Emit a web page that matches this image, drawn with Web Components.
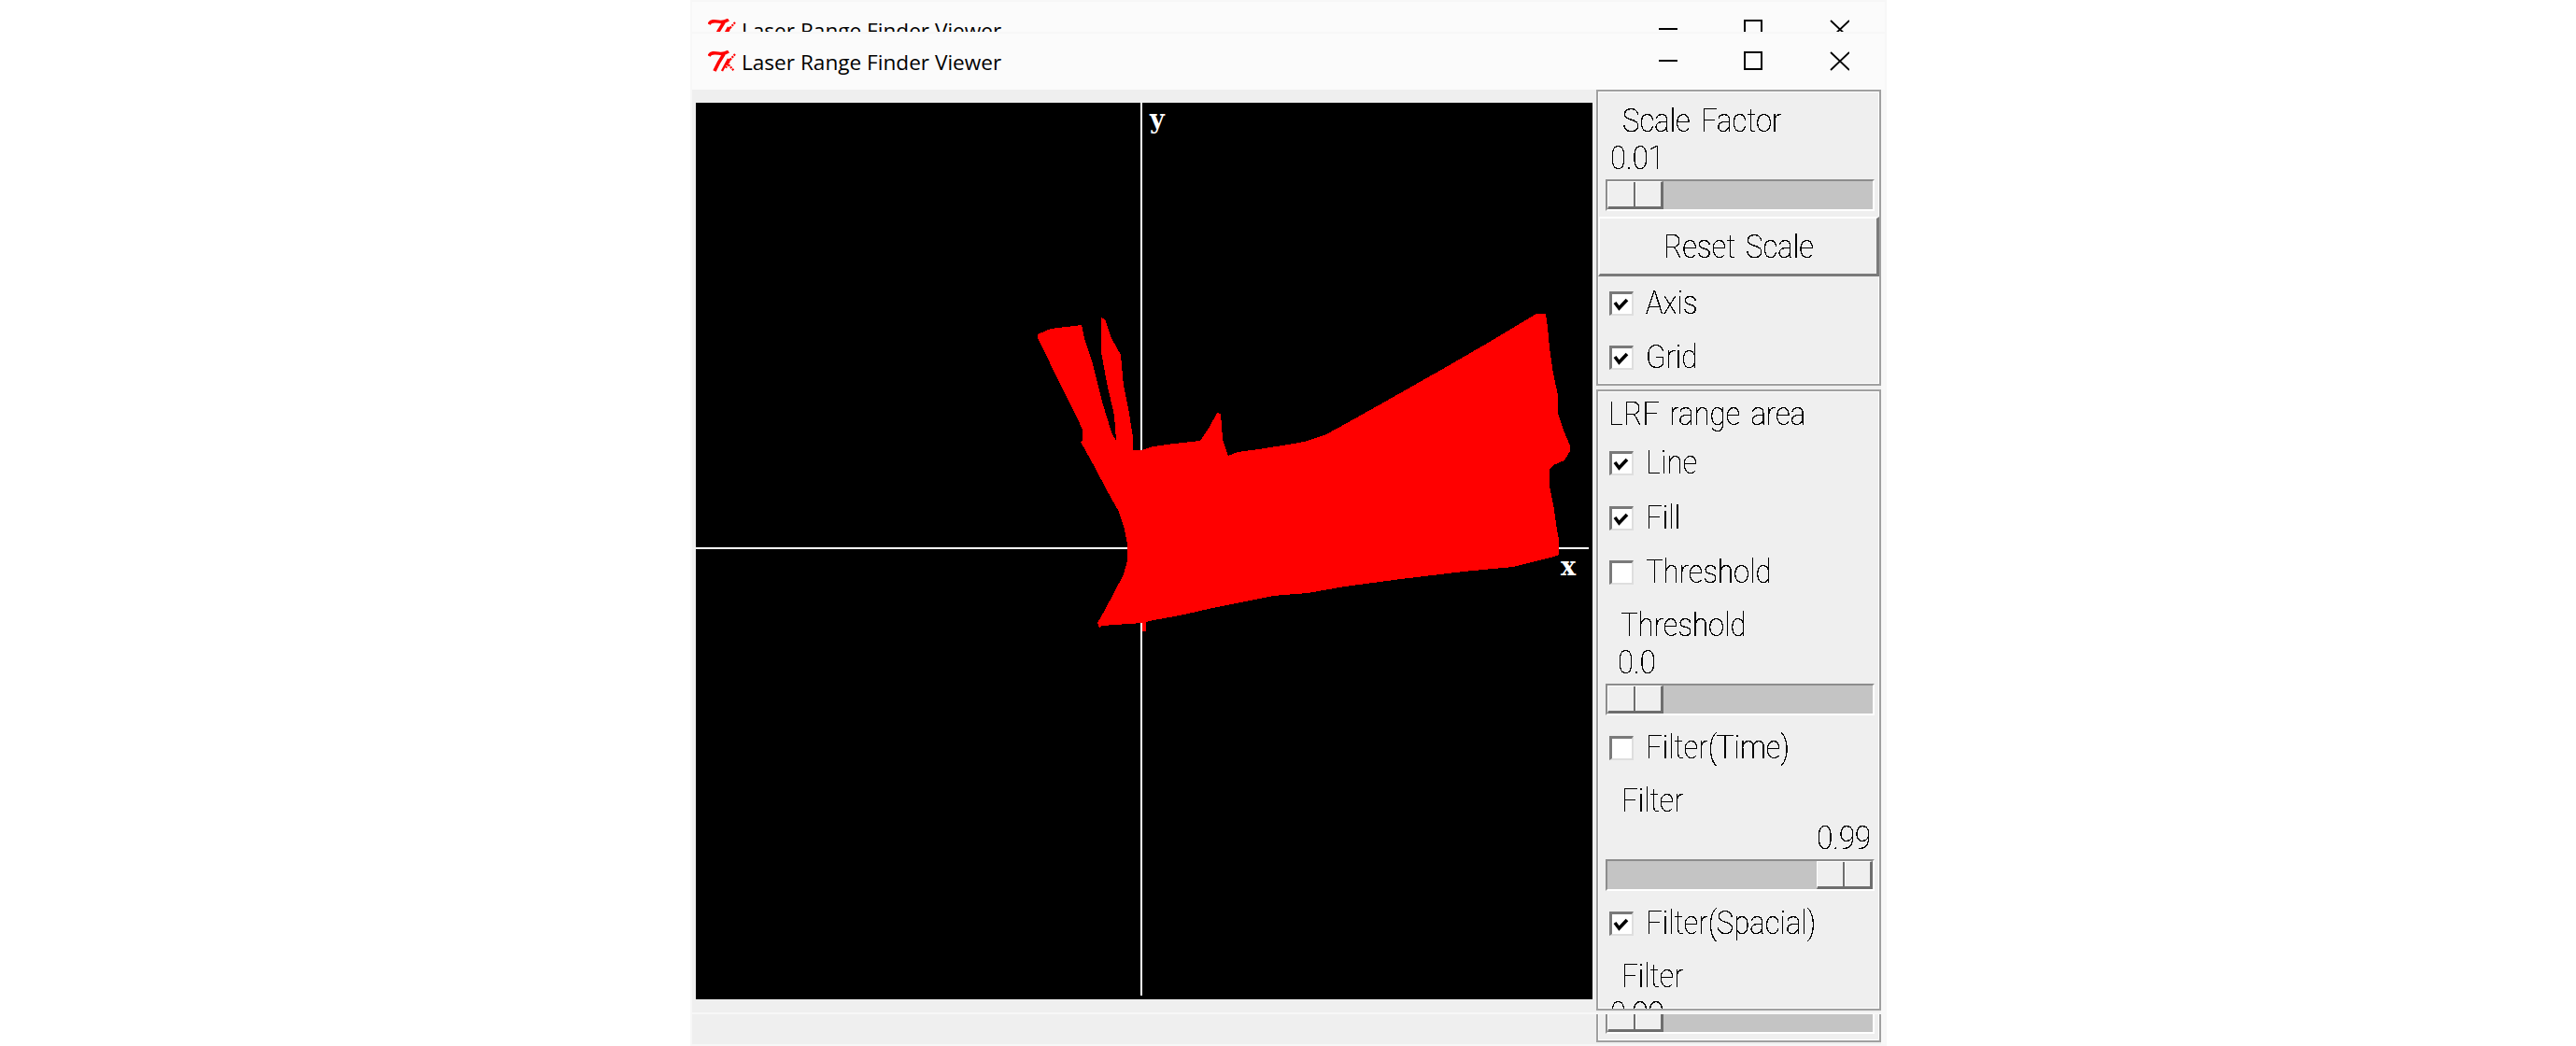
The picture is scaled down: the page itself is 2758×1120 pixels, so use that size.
<!DOCTYPE html>
<html>
<head>
<meta charset="utf-8">
<title>Laser Range Finder Viewer</title>
<style>
    html, body { margin: 0; height: 100%; background: #fff; }
    body { overflow: hidden; }
    lrf-window.back { left: 741px; top: 2px; height: 1116px; }
    lrf-window.front { left: 741px; top: 36px; height: 1048px; }
</style>
</head>
<body>
<lrf-window class="back">
    <tk-frame slot="panel" style="height: 1054px; justify-content: flex-end; padding-bottom: 1px;">
        <tk-scale pos="0" bare></tk-scale>
    </tk-frame>
</lrf-window>

<lrf-window class="front">
    <lrf-canvas slot="canvas"></lrf-canvas>
    <tk-frame slot="panel" style="height: 317px; margin-bottom: 4px;">
        <tk-scale label="Scale Factor" value="0.01" pos="0" label-x="25" value-x="12" style="margin-top: 3px;"></tk-scale>
        <tk-button>Reset Scale</tk-button>
        <tk-check checked>Axis</tk-check>
        <tk-check checked>Grid</tk-check>
    </tk-frame>
    <tk-frame slot="panel" style="height: 665px;">
        <tk-text style="height: 47px; padding: 11px 0 0 10px; box-sizing: border-box;">LRF range area</tk-text>
        <tk-check checked style="--row-h: 59px;">Line</tk-check>
        <tk-check checked>Fill</tk-check>
        <tk-check>Threshold</tk-check>
        <tk-scale label="Threshold" value="0.0" pos="0" label-x="23" value-x="20"></tk-scale>
        <tk-check>Filter(Time)</tk-check>
        <tk-scale label="Filter" value="0.99" pos="1" label-x="24" value-end></tk-scale>
        <tk-check checked>Filter(Spacial)</tk-check>
        <tk-scale label="Filter" value="0.99" pos="0" label-x="24" value-x="12"></tk-scale>
    </tk-frame>
</lrf-window>

<script>
// thin aliased lettering, like the old bitmap font Tk falls back on
class TkText extends HTMLElement {
    constructor() {
        super();
        this.attachShadow({ mode: 'open' });
    }

    connectedCallback() {
        this.shadowRoot.innerHTML = `
            <style>
                :host {
                    display: block;
                    flex-shrink: 0;
                    font-family: Roboto, "Liberation Sans", sans-serif;
                    font-weight: 100;
                    font-size: 35px;
                    line-height: 26px;
                    word-spacing: 4px;
                    color: #000;
                    white-space: nowrap;
                }
                .crisp { display: inline-block; filter: url(#crisp); }
                .squeeze {
                    display: inline-block;
                    transform: scaleX(var(--squeeze, 0.89));
                    transform-origin: var(--origin, left) center;
                }
                svg { position: absolute; width: 0; height: 0; }
            </style>
            <svg aria-hidden="true"><filter id="crisp" x="-5%" y="-20%" width="110%" height="140%" color-interpolation-filters="sRGB">
                <feComponentTransfer><feFuncA type="discrete" tableValues="0 1 1 1"></feFuncA></feComponentTransfer>
            </filter></svg>
            <span class="crisp"><span class="squeeze"><slot></slot></span></span>
        `;
    }
}

class TkFrame extends HTMLElement {
    constructor() {
        super();
        this.attachShadow({ mode: 'open' });
    }

    connectedCallback() {
        this.shadowRoot.innerHTML = `
            <style>
                :host {
                    display: flex;
                    flex-direction: column;
                    box-sizing: border-box;
                    width: 305px;
                    border: 2px solid #a0a0a0;
                    padding: 1px;
                    background: #efefef;
                    box-shadow: inset 0 0 0 1px #fff;
                    overflow: hidden;
                    flex-shrink: 0;
                }
            </style>
            <slot></slot>
        `;
    }
}

class TkScale extends HTMLElement {
    constructor() {
        super();
        this.attachShadow({ mode: 'open' });
    }

    connectedCallback() {
        const label = this.getAttribute('label');
        const value = this.getAttribute('value');
        const atEnd = this.getAttribute('pos') === '1';
        const labelX = this.getAttribute('label-x') || 0;
        const valueX = this.getAttribute('value-x') || 0;
        const valueEnd = this.hasAttribute('value-end');
        const bare = this.hasAttribute('bare');

        this.shadowRoot.innerHTML = `
            <style>
                :host {
                    display: block;
                    height: ${bare ? 40 : 130}px;
                    flex-shrink: 0;
                }
                .label { height: 54px; box-sizing: border-box; padding: 15px 0 0 ${labelX}px; }
                .value { height: 36px; box-sizing: border-box; padding: 1px 0 0 ${valueX}px; }
                .value.end { padding: 1px 8px 0 0; text-align: right; --origin: right; display: flex; justify-content: flex-end; }
                .trough {
                    box-sizing: border-box;
                    display: flex;
                    justify-content: ${atEnd ? 'flex-end' : 'flex-start'};
                    margin: 0 4px 0 7px;
                    height: 34px;
                    background: #c4c4c4;
                    border-top: 2px solid #8c8c8c;
                    border-left: 2px solid #8c8c8c;
                    border-bottom: 2px solid #fff;
                    border-right: 2px solid #fff;
                }
                .thumb {
                    box-sizing: border-box;
                    display: flex;
                    width: 60px;
                    height: 30px;
                    background: #efefef;
                    border-top: 1px solid #fff;
                    border-left: 1px solid #fff;
                    border-right: 3px solid #6e6e6e;
                    border-bottom: 3px solid #6e6e6e;
                }
                .thumb i { flex: 1; }
                .thumb i:first-child { border-right: 2px solid #6e6e6e; }
                .thumb i:last-child { border-left: 1px solid #fff; }
            </style>
            ${bare ? '' : `<tk-text class="label">${label}</tk-text>
            <tk-text class="value ${valueEnd ? 'end' : ''}">${value}</tk-text>`}
            <div class="trough"><div class="thumb"><i></i><i></i></div></div>
        `;
    }
}

class TkButton extends HTMLElement {
    constructor() {
        super();
        this.attachShadow({ mode: 'open' });
    }

    connectedCallback() {
        this.shadowRoot.innerHTML = `
            <style>
                :host {
                    display: flex;
                    align-items: center;
                    justify-content: center;
                    box-sizing: border-box;
                    height: 64px;
                    margin: 0 -1px;
                    padding-top: 2px;
                    flex-shrink: 0;
                    background: #efefef;
                    border-top: 2px solid #fff;
                    border-left: 2px solid #fff;
                    border-right: 3px solid #7a7a7a;
                    border-bottom: 3px solid #7a7a7a;
                    --origin: center;
                }
            </style>
            <tk-text><slot></slot></tk-text>
        `;
    }
}

class TkCheck extends HTMLElement {
    constructor() {
        super();
        this.attachShadow({ mode: 'open' });
    }

    connectedCallback() {
        const mark = this.hasAttribute('checked')
            ? '<svg viewBox="0 0 26 26" width="26" height="26"><path d="M6 12 L10.5 18 L19 9" fill="none" stroke="#000" stroke-width="3.6"/></svg>'
            : '';
        this.shadowRoot.innerHTML = `
            <style>
                :host {
                    display: flex;
                    align-items: flex-start;
                    box-sizing: border-box;
                    height: var(--row-h, 58px);
                    padding: 16px 0 0 11px;
                    flex-shrink: 0;
                }
                .box {
                    position: relative;
                    box-sizing: border-box;
                    flex: none;
                    width: 26px;
                    height: 26px;
                    background: #fff;
                    border-top: 3px solid #7a7a7a;
                    border-left: 3px solid #7a7a7a;
                    border-right: 2px solid #dedede;
                    border-bottom: 2px solid #dedede;
                }
                .box svg { position: absolute; left: -3px; top: -3px; }
                tk-text { margin-left: 13px; }
            </style>
            <span class="box">${mark}</span>
            <tk-text><slot></slot></tk-text>
        `;
    }
}

const RANGE_AREA = [
    [1111,358],[1125,352],[1158,348],[1161,362],[1170,390],[1180,430],[1190,463],[1195,472],
    [1193,445],[1185,410],[1179,377],[1179,340],[1183,342],[1190,362],[1200,380],[1203,413],
    [1208,437],[1213,468],[1213,482],[1222,482],[1235,478],[1257,475],[1285,472],[1295,457],
    [1303,442],[1307,443],[1309,470],[1315,488],[1325,484],[1348,481],[1385,475],[1400,472],
    [1420,465],[1433,458],[1483,430],[1550,392],[1600,363],[1645,336],[1655,336],[1657,350],
    [1659,373],[1663,400],[1668,423],[1668,443],[1675,463],[1681,477],[1681,483],[1675,493],
    [1663,498],[1659,503],[1659,520],[1663,540],[1667,567],[1669,577],[1669,594],[1660,597],
    [1620,607],[1567,612],[1500,620],[1440,628],[1400,635],[1363,638],[1303,650],[1263,659],
    [1230,665],[1227,666],[1227,676],[1223,676],[1223,667],[1180,670],[1177,672],[1175,667],
    [1183,653],[1203,615],[1207,600],[1207,583],[1204,567],[1198,548],[1185,525],[1172,500],
    [1157,473],[1159,472],[1159,460],[1153,447],[1133,407],[1115,370],[1111,362]
];

class LrfCanvas extends HTMLElement {
    constructor() {
        super();
        this.attachShadow({ mode: 'open' });
    }

    connectedCallback() {
        // scan points were read off in page pixels, the canvas starts at 745,110
        const points = RANGE_AREA.map(([x, y]) => `${x - 745},${y - 110}`).join(' ');
        this.shadowRoot.innerHTML = `
            <style>
                :host { display: block; width: 960px; height: 960px; background: #000; }
                svg { display: block; }
                text { font-family: "DejaVu Serif", "Liberation Serif", serif; font-weight: 700; font-size: 27px; fill: #fff; }
            </style>
            <svg width="960" height="960" viewBox="0 0 960 960" shape-rendering="crispEdges">
                <rect x="476" y="0" width="2" height="956" fill="#fff"/>
                <rect x="0" y="476" width="956" height="2" fill="#fff"/>
                <polygon points="${points}" fill="#f00"/>
                <text x="486" y="27">y</text>
                <text x="926" y="506">x</text>
            </svg>
        `;
    }
}

class LrfWindow extends HTMLElement {
    constructor() {
        super();
        this.attachShadow({ mode: 'open' });
    }

    connectedCallback() {
        this.shadowRoot.innerHTML = `
            <style>
                :host {
                    position: absolute;
                    display: flex;
                    flex-direction: column;
                    width: 1277px;
                    background: #efefef;
                    box-shadow: 0 0 0 2px #f7f7f7;
                    overflow: hidden;
                }
                header {
                    display: flex;
                    align-items: center;
                    flex: none;
                    height: 60px;
                    background: #fbfbfb;
                    font-family: "Open Sans", "Noto Sans", sans-serif;
                    font-size: 22.6px;
                    color: #000;
                }
                .logo { margin: 0 6px 0 17px; flex: none; }
                .name { flex: 1; }
                .ctl { flex: none; display: block; }
                .body { display: flex; flex: 1; min-height: 0; }
                .draw { width: 960px; flex: none; padding: 14px 4px 0; }
                .panel { width: 305px; flex: none; display: flex; flex-direction: column; }
                .edge { width: 4px; flex: none; background: #f8f8f8; }
            </style>
            <header>
                <svg class="logo" width="30" height="24" viewBox="0 0 30 24" fill="none" stroke="#f00">
                    <path d="M1 6 C3 1 9 3 14 3.5 C17 3.5 19 3 22 1" stroke-width="3.4"/>
                    <path d="M17 4 C13 10 10 15 7 22" stroke-width="3.6"/>
                    <path d="M22 9 L15 22" stroke-width="2.4"/>
                    <path d="M29 4 L20 14 M20 13 L28 22 M24 9 L19 19" stroke-width="2.2" stroke-dasharray="2 1"/>
                </svg>
                <span class="name">Laser Range Finder Viewer</span>
                <svg class="ctl" width="204" height="24" viewBox="0 0 204 24" fill="none" stroke="#000" stroke-width="2" shape-rendering="crispEdges">
                    <path d="M0 11 H20"/>
                    <rect x="92" y="2" width="18" height="18"/>
                    <path d="M184 2 L204 21 M204 2 L184 21" shape-rendering="auto" stroke-width="1.8"/>
                </svg>
                <span style="width: 38px; flex: none;"></span>
            </header>
            <div class="body">
                <div class="draw"><slot name="canvas"></slot></div>
                <div class="panel"><slot name="panel"></slot></div>
                <div class="edge"></div>
            </div>
        `;
    }
}

customElements.define('tk-text', TkText);
customElements.define('tk-frame', TkFrame);
customElements.define('tk-scale', TkScale);
customElements.define('tk-button', TkButton);
customElements.define('tk-check', TkCheck);
customElements.define('lrf-canvas', LrfCanvas);
customElements.define('lrf-window', LrfWindow);
</script>
</body>
</html>
